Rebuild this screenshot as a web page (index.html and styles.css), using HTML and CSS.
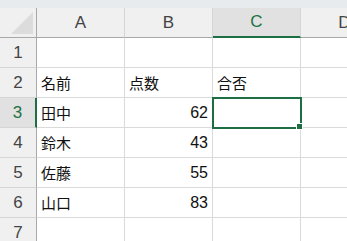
FILE: index.html
```html
<!DOCTYPE html>
<html lang="ja">
<head>
    <meta charset="UTF-8">
    <title>Sheet1</title>
    <link rel="stylesheet" href="styles.css">
</head>
<body>
<div class="topbar"></div>
<div class="sheet">
    <div class="corner"><span class="tri"></span></div>
    <div class="colhead">A</div>
    <div class="colhead">B</div>
    <div class="colhead active">C</div>
    <div class="colhead">D</div>

    <div class="rowhead">1</div>
    <div class="cell"></div><div class="cell"></div><div class="cell"></div><div class="cell"></div>

    <div class="rowhead">2</div>
    <div class="cell">名前</div><div class="cell">点数</div><div class="cell">合否</div><div class="cell"></div>

    <div class="rowhead active">3</div>
    <div class="cell">田中</div><div class="cell num">62</div><div class="cell selected"><span class="handle"></span></div><div class="cell"></div>

    <div class="rowhead">4</div>
    <div class="cell">鈴木</div><div class="cell num">43</div><div class="cell"></div><div class="cell"></div>

    <div class="rowhead">5</div>
    <div class="cell">佐藤</div><div class="cell num">55</div><div class="cell"></div><div class="cell"></div>

    <div class="rowhead">6</div>
    <div class="cell">山口</div><div class="cell num">83</div><div class="cell"></div><div class="cell"></div>

    <div class="rowhead">7</div>
    <div class="cell"></div><div class="cell"></div><div class="cell"></div><div class="cell"></div>
</div>
</body>
</html>
```

FILE: styles.css
```css
body {
    margin: 0;
    background-color: #ffffff;
    font-family: "Noto Sans CJK JP", "Noto Sans", sans-serif;
    overflow: hidden;
}
.topbar {
    height: 8px;
    background-color: #e8ebee;
}
.sheet {
    display: grid;
    grid-template-columns: 37px 88px 88px 88px 88px;
    grid-auto-rows: 30px;
}
.corner,
.colhead,
.rowhead {
    background-color: #f0f0f0;
    color: #444444;
    font-family: "Liberation Sans", Arial, sans-serif;
    font-size: 17px;
    display: flex;
    align-items: center;
    justify-content: center;
    box-sizing: border-box;
}
.corner {
    border-right: 1px solid #a8a8a8;
    border-bottom: 1px solid #a8a8a8;
    position: relative;
}
.tri {
    position: absolute;
    left: 11px;
    top: 4px;
    width: 0;
    height: 0;
    border-left: 22px solid transparent;
    border-bottom: 22px solid #dcdcdc;
}
.colhead {
    border-right: 1px solid #d5d5d5;
    border-bottom: 1px solid #a8a8a8;
}
.colhead.active {
    background-color: #e1e1e1;
    color: #1e7145;
    border-bottom: 2px solid #1e6e44;
}
.rowhead {
    border-right: 1px solid #a8a8a8;
    border-bottom: 1px solid #d5d5d5;
}
.rowhead.active {
    background-color: #e1e1e1;
    color: #1e7145;
    border-right: 2px solid #1e6e44;
}
.cell {
    border-right: 1px solid #dadada;
    border-bottom: 1px solid #dadada;
    box-sizing: border-box;
    font-size: 15px;
    color: #111111;
    padding: 0 4px;
    display: flex;
    align-items: center;
    position: relative;
}
.cell.num {
    justify-content: flex-end;
    font-family: "Liberation Sans", Arial, sans-serif;
    font-size: 16px;
}
.cell.selected {
    outline: 2px solid #1e6e44;
    outline-offset: -1px;
    z-index: 1;
}
.handle {
    position: absolute;
    right: -3px;
    bottom: -3px;
    width: 5px;
    height: 5px;
    background-color: #1e6e44;
    border: 1px solid #ffffff;
}
```
